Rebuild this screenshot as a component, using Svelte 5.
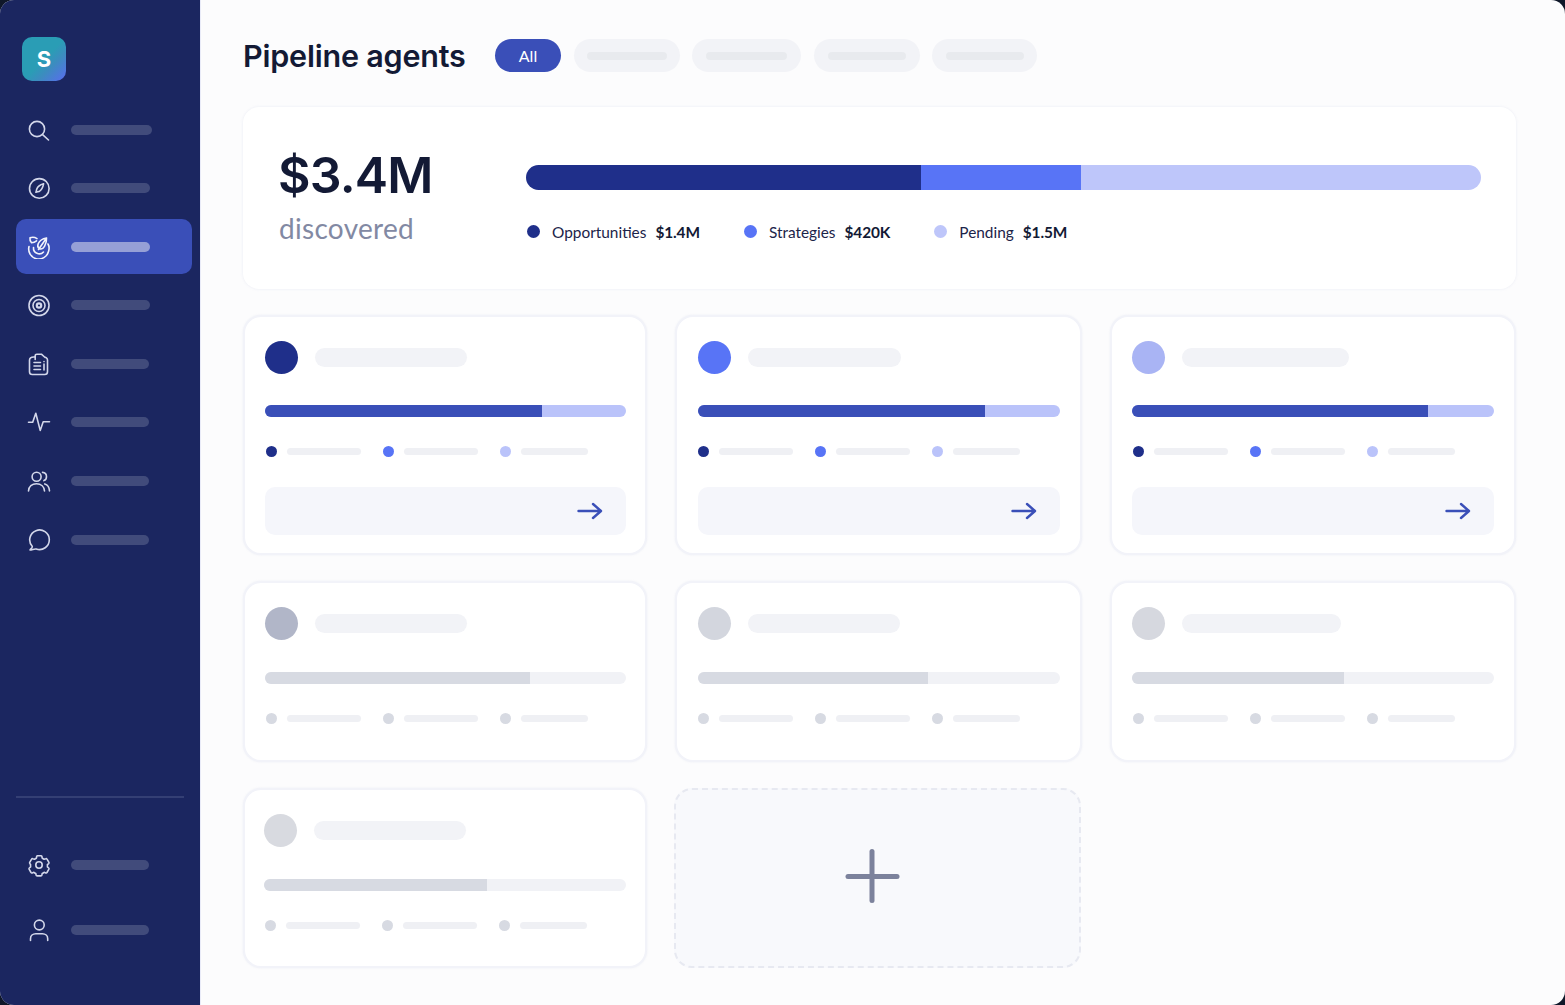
<script>
  const nav = [
    { icon: 'search', w: 81 },
    { icon: 'compass', w: 79 },
    { icon: 'dart', w: 79, active: true },
    { icon: 'target', w: 79 },
    { icon: 'doc', w: 78 },
    { icon: 'pulse', w: 78 },
    { icon: 'users', w: 78 },
    { icon: 'chat', w: 78 }
  ];
  const bottom = [
    { icon: 'gear', w: 78 },
    { icon: 'user', w: 78 }
  ];
  const pills = [106, 109, 106, 105];
  const pillBars = [80, 81, 78, 78];
  const legend = [
    { cls: 'navy', label: 'Opportunities', value: '$1.4M' },
    { cls: 'blue', label: 'Strategies', value: '$420K' },
    { cls: 'pale', label: 'Pending', value: '$1.5M' }
  ];
  const cards = [
    { avatar: '#1f2f8a', name: 152, fill: 76.7, live: true },
    { avatar: '#5874f6', name: 153, fill: 79.3, live: true },
    { avatar: '#a9b4f4', name: 167, fill: 81.8, live: true },
    { avatar: '#b1b6c8', name: 152, fill: 73.4 },
    { avatar: '#d3d6de', name: 152, fill: 63.5 },
    { avatar: '#d6d8df', name: 159, fill: 58.5 },
    { avatar: '#d8dae0', name: 152, fill: 61.5 }
  ];
</script>

{#snippet icon(name)}
  <svg class="icon" viewBox="0 0 24 24" width="24" height="24" fill="none" stroke="currentColor" stroke-width="1.6" stroke-linecap="round" stroke-linejoin="round">
    {#if name === 'search'}
      <circle cx="10" cy="11" r="7.6" /><path d="M15.6 16.6 21.5 22" />
    {:else if name === 'compass'}
      <circle cx="12.3" cy="12.4" r="9.8" /><path d="M16.6 7.8c-3.4 1-6 3-6.8 5.2-.4 1.1-.2 1.6-.9 3.2 1.6-.6 2.7-.4 3.7-1 2.2-1.5 3.3-4.2 4-7.4Z" />
    {:else if name === 'dart'}
      <path d="M3 2.800c2.200-.8 4.800-.6 7 .8M3 2.800c-.3 2 .2 3.700 1.500 5 1.800-.2 3.500-.8 5-2" />
      <path d="M2 11.500a10 10 0 0 0 19.500 5c1-3 .7-5.500-.5-7.500" />
      <path d="M6.500 12.500a5.800 5.800 0 0 0 10 4.500M19.500 3 11.500 14.500M19.500 3c-3.500.6-7 2.800-8.300 5.800-.7 1.800-.6 3.700 1 4.700 1.800 1 4 0 5.300-2.200 1.400-2.400 2.200-5.300 2-8.300Z" />
    {:else if name === 'target'}
      <circle cx="12" cy="12.500" r="10" /><circle cx="12" cy="12.500" r="6" /><circle cx="12" cy="12.500" r="2.200" stroke-width="2.200" />
    {:else if name === 'doc'}
      <path d="M6.500 5h1.700V3.800c0-.9.700-1.600 1.600-1.600h4.600l3.700 3.300c.3-.3 2.400.3 2.400 2.500v11.700c0 1.500-1.200 2.800-2.800 2.800H5.300a2.800 2.800 0 0 1-2.800-2.800V8.300C2.500 6.400 4 5 6.500 5Z" />
      <path d="M8.200 5v2.500M7 10.500h6.500M7 14h6.500M7 17.500h6.500M17 12v6M17 9.500v.1" />
    {:else if name === 'pulse'}
      <path d="M1.500 12.300h4.200L8.800 3.200l4.400 17.200 3-8.700h6.300" />
    {:else if name === 'users'}
      <circle cx="9.600" cy="7.700" r="4.500" /><path d="M1.500 22c.3-4.400 3.500-7.300 8-7.300 4.600 0 7.800 3 8 7.300M15.500 3.400c2.600.2 4 2 4 4.300 0 1.700-1 3.300-2.600 3.900M17.800 14.900c2.800.8 4.500 3.500 4.700 7" />
    {:else if name === 'chat'}
      <path d="M5.200 18.300A9.800 9.800 0 1 1 9.200 21C7.500 20.500 5 22 3 22C3.500 21 5.800 19.800 5.200 18.300Z" />
    {:else if name === 'gear'}
      <circle cx="12" cy="12" r="3.200" />
      <path d="M10.100 2.700h3.800c.5 0 .9.300 1 .8l.3 1.700c.7.300 1.300.6 1.900 1.100l1.700-.6c.5-.2 1 0 1.200.4l1.900 3.300c.2.400.1.900-.2 1.200l-1.300 1.100c.1.800.1 1.500 0 2.200l1.300 1.100c.3.300.4.800.2 1.200l-1.900 3.300c-.2.400-.7.600-1.200.4l-1.700-.6c-.6.500-1.200.8-1.900 1.100l-.3 1.700c-.1.500-.5.800-1 .8h-3.800c-.5 0-.9-.3-1-.8l-.3-1.700c-.7-.3-1.300-.6-1.900-1.100l-1.700.6c-.5.200-1 0-1.200-.4l-1.900-3.300c-.2-.4-.1-.9.200-1.200l1.300-1.100c-.1-.7-.1-1.400 0-2.200L2.900 10.600c-.3-.3-.4-.8-.2-1.200l1.900-3.300c.2-.4.700-.6 1.200-.4l1.700.6c.6-.5 1.200-.8 1.900-1.100l.3-1.700c.1-.5.500-.8 1-.8Z" />
    {:else if name === 'user'}
      <circle cx="12.300" cy="7" r="4.900" /><path d="M3.500 22.500v-1.700c0-3 2.300-5 5.300-5h6.600c3 0 5.300 2 5.300 5v1.700" />
    {/if}
  </svg>
{/snippet}

<div class="shell">
  <aside class="sidebar">
    <div class="logo">S</div>
    <nav class="nav">
      {#each nav as item}
        <div class="nav-item" class:active={item.active}>
          {@render icon(item.icon)}
          <span class="nav-label" style="width: {item.w}px"></span>
        </div>
      {/each}
    </nav>
    <div class="foot">
      <div class="divider"></div>
      {#each bottom as item}
        <div class="nav-item">
          {@render icon(item.icon)}
          <span class="nav-label" style="width: {item.w}px"></span>
        </div>
      {/each}
    </div>
  </aside>

  <main class="main">
    <header class="top">
      <h1>Pipeline agents</h1>
      <div class="pills">
        <span class="pill on">All</span>
        {#each pills as w, i}
          <span class="pill" style="width: {w}px"><span class="pill-bar" style="width: {pillBars[i]}px"></span></span>
        {/each}
      </div>
    </header>

    <section class="hero">
      <div class="stat">
        <div class="amount">$3.4M</div>
        <div class="caption">discovered</div>
      </div>
      <div class="summary">
        <div class="stack">
          <span class="navy" style="width: 41.4%"></span>
          <span class="blue" style="width: 16.75%"></span>
          <span class="pale" style="width: 41.85%"></span>
        </div>
        <div class="legend">
          {#each legend as l}
            <div class="legend-item">
              <span class="legend-dot {l.cls}"></span>
              <span class="legend-label">{l.label}</span>
              <b>{l.value}</b>
            </div>
          {/each}
        </div>
      </div>
    </section>

    <section class="grid">
      {#each cards as c}
        <article class="card" class:live={c.live}>
          <div class="card-head">
            <span class="avatar" style="background: {c.avatar}"></span>
            <span class="name" style="width: {c.name}px"></span>
          </div>
          <div class="meter"><span style="width: {c.fill}%"></span></div>
          <div class="keys">
            <div class="key k1"><i></i><span></span></div>
            <div class="key k2"><i></i><span></span></div>
            <div class="key k3"><i></i><span></span></div>
          </div>
          {#if c.live}
            <div class="cta">
              <svg viewBox="0 0 26 18" width="26" height="18" fill="none" stroke="#3a4fb8" stroke-width="2.400" stroke-linecap="round" stroke-linejoin="round">
                <path d="M1.500 9h22M16 2l8 7-8 7" />
              </svg>
            </div>
          {/if}
        </article>
      {/each}
      <div class="add">
        <span class="plus"></span>
      </div>
    </section>
  </main>
</div>

<style>
  :global(body) {
    margin: 0;
    background: #0f1729;
  }
  .shell {
    width: 1565px;
    height: 1005px;
    display: flex;
    border-radius: 14px;
    overflow: hidden;
    font-family: "Lato", "Open Sans", sans-serif;
    background: #fcfcfd;
  }
  .sidebar {
    width: 201px;
    flex: none;
    box-sizing: border-box;
    background: #1b2660;
    border-right: 1px solid #e9ebf8;
    padding: 37px 0 47.5px 16px;
    display: flex;
    flex-direction: column;
  }
  .logo {
    width: 44px;
    height: 44px;
    margin-left: 6px;
    margin-bottom: 21px;
    border-radius: 10px;
    background: linear-gradient(135deg, #2a9db5 50%, #3d8bc0 68%, #5a6cf0 100%);
    color: #fff;
    font: 700 22px/44px "Inter", sans-serif;
    text-align: center;
  }
  .nav {
    display: flex;
    flex-direction: column;
    gap: 3.6px;
  }
  .nav-item {
    width: 176px;
    height: 55px;
    box-sizing: border-box;
    padding-left: 11px;
    display: flex;
    align-items: center;
    gap: 20px;
    border-radius: 10px;
    color: #d3d7ea;
  }
  .nav-item.active {
    background: #3a4fb8;
    color: #f2f3fb;
  }
  .icon { flex: none; }
  .nav-label {
    height: 10px;
    border-radius: 5px;
    background: #414b7b;
  }
  .active .nav-label { background: #96a0d6; }
  .foot {
    margin-top: auto;
    display: flex;
    flex-direction: column;
    gap: 10px;
  }
  .divider {
    width: 168px;
    height: 2px;
    margin-bottom: 30px;
    background: #343f74;
  }
  .main {
    flex: 1;
    min-width: 0;
    box-sizing: border-box;
    padding: 39px 49px 0 42px;
  }
  .top {
    display: flex;
    align-items: center;
    gap: 30px;
    height: 33px;
  }
  h1 {
    margin: 0;
    width: 222px;
    font: 600 30.5px/33px "Inter", sans-serif;
    letter-spacing: -0.2px;
    color: #131a35;
    white-space: nowrap;
  }
  .pills {
    display: flex;
    gap: 12.5px;
  }
  .pill {
    height: 33px;
    border-radius: 17px;
    background: #f2f3f7;
    display: flex;
    align-items: center;
    justify-content: center;
  }
  .pill.on {
    width: 66px;
    background: #3a4fb8;
    color: #fff;
    font-size: 16px;
  }
  .pill-bar {
    height: 8px;
    border-radius: 4px;
    background: #e8eaee;
  }
  .hero {
    margin-top: 35px;
    height: 182px;
    box-sizing: border-box;
    padding: 58px 35px 0 36px;
    display: flex;
    background: #fff;
    border-radius: 16px;
    box-shadow: 0 0 3px rgba(225, 228, 240, 0.6);
  }
  .stat {
    width: 247px;
    flex: none;
    margin-top: -21px;
  }
  .amount {
    font: 600 50px/62px "Inter", sans-serif;
    letter-spacing: -0.8px;
    margin-left: -1px;
    color: #131a35;
  }
  .caption {
    font: 400 28px/36px "Lato", sans-serif;
    letter-spacing: 0.3px;
    color: #8289a3;
    margin-top: 4px;
  }
  .summary { flex: 1; }
  .stack {
    height: 25px;
    display: flex;
    border-radius: 13px;
    overflow: hidden;
  }
  .navy { background: #1f2f8a; }
  .blue { background: #5874f6; }
  .pale { background: #bec6fa; }
  .legend {
    display: flex;
    gap: 44px;
    margin-top: 32px;
    height: 19px;
    align-items: center;
    padding-left: 1px;
    font-size: 15.4px;
    color: #1c2449;
  }
  .legend-item {
    display: flex;
    align-items: center;
  }
  .legend-dot {
    width: 13px;
    height: 13px;
    border-radius: 50%;
    margin-right: 12px;
  }
  .legend-item b {
    margin-left: 9px;
    font-weight: 700;
    letter-spacing: -0.1px;
    color: #131a35;
  }
  .grid {
    margin-top: 26px;
    display: grid;
    grid-template-columns: 404px 407px 406px;
    grid-template-rows: 240px 181px 180px;
    gap: 26px 28px;
  }
  .card {
    box-sizing: border-box;
    padding: 24px 19px 0 20px;
    background: #fff;
    border: 2px solid #f2f3f9;
    border-radius: 18px;
    box-shadow: 0 0 2px rgba(225, 228, 240, 0.6);
  }
  .card:nth-child(3n+2) { padding-left: 21px; padding-right: 20px; }
  .card:nth-child(3n) { padding-right: 20px; }
  .card:nth-child(7) { padding-left: 19px; padding-right: 19px; }
  .card-head {
    display: flex;
    align-items: center;
    gap: 17px;
    height: 33px;
  }
  .avatar {
    width: 33px;
    height: 33px;
    border-radius: 50%;
    flex: none;
  }
  .name {
    height: 19px;
    border-radius: 10px;
    background: #f2f3f7;
  }
  .meter {
    height: 12px;
    margin-top: 32px;
    border-radius: 6px;
    overflow: hidden;
    background: #f1f2f6;
  }
  .live .meter { margin-top: 31px; }
  .meter span {
    display: block;
    height: 100%;
    background: #d7dae2;
  }
  .live .meter { background: #bac3fa; }
  .live .meter span { background: #3a4fb8; }
  .keys {
    display: flex;
    height: 11px;
    align-items: center;
    margin-top: 28.500px;
  }
  .card:nth-child(3n+1) .keys, .card:nth-child(3n) .keys { padding-left: 0.5px; }
  .key {
    display: flex;
    align-items: center;
    gap: 10px;
  }
  .k1, .k2 { width: 117px; }
  .key i {
    width: 11px;
    height: 11px;
    border-radius: 50%;
    background: #d7dae2;
    flex: none;
  }
  .key span {
    height: 7px;
    border-radius: 4px;
    background: #eff0f4;
    width: 74px;
  }
  .k3 span { width: 67px; }
  .live .k1 i { background: #1f2f8a; }
  .live .k2 i { background: #5874f6; }
  .live .k3 i { background: #bac3fa; }
  .cta {
    margin-top: 30.500px;
    height: 48px;
    border-radius: 10px;
    background: #f5f6fb;
    display: flex;
    align-items: center;
    justify-content: flex-end;
    padding-right: 23px;
  }
  .add {
    border: 2px dashed #e7e9f1;
    border-radius: 18px;
    background: #f8f9fc;
    display: flex;
    align-items: center;
    justify-content: center;
    margin-left: -1px;
    margin-right: 1px;
  }
  .plus {
    position: relative;
    width: 54px;
    height: 54px;
    transform: translate(-5.5px, -2px);
  }
  .plus::before, .plus::after {
    content: "";
    position: absolute;
    background: #7c829c;
    border-radius: 3px;
  }
  .plus::before { left: 0; right: 0; top: 24.500px; height: 5px; }
  .plus::after { top: 0; bottom: 0; left: 24.500px; width: 5px; }
</style>
